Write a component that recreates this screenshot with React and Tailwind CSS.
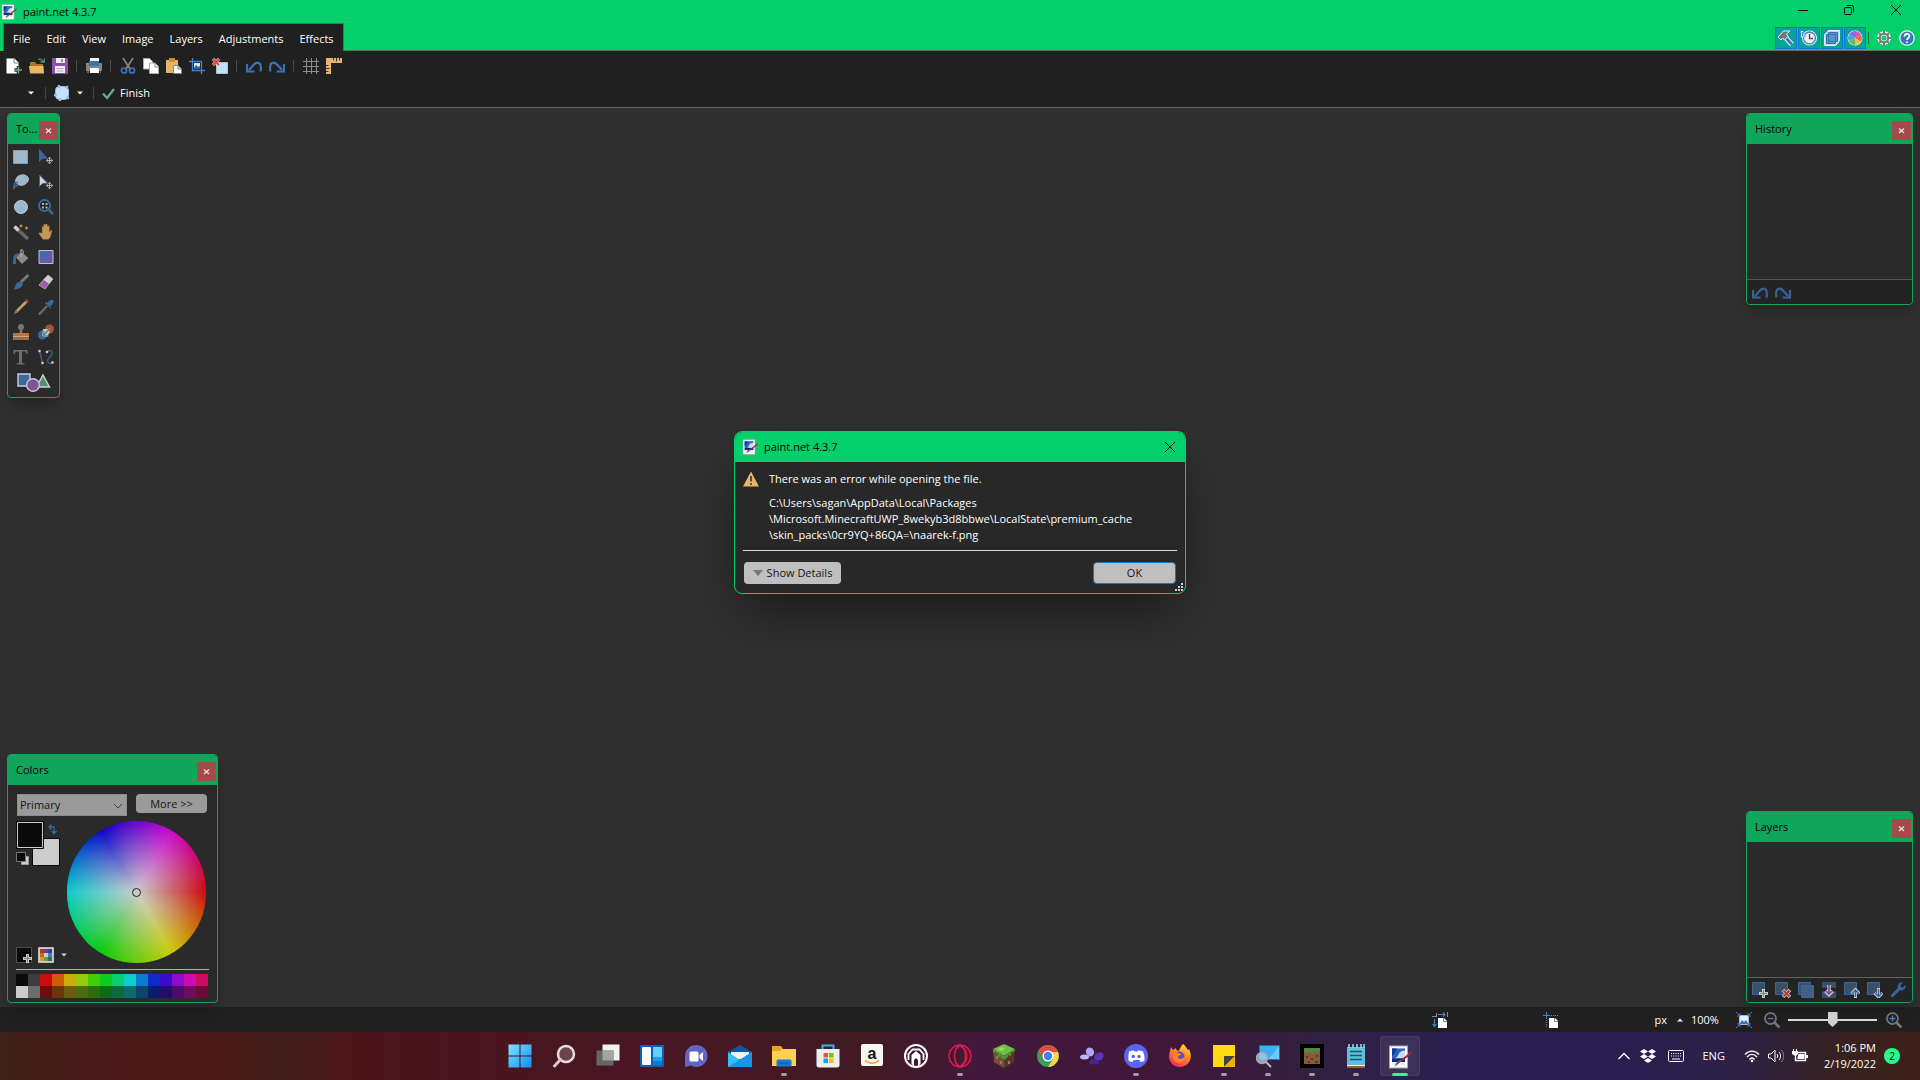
import { useState } from "react";

const menus = ["File", "Edit", "View", "Image", "Layers", "Adjustments", "Effects"];

const palette = [
  ["#0a0a0a", "#3c3c3c", "#cc0c0c", "#cc5c0c", "#ccac0c", "#94cc0c", "#44cc0c", "#0ccc24", "#0ccc74", "#0ccccc", "#0c7ccc", "#0c2ccc", "#3c0ccc", "#8c0ccc", "#cc0cb0", "#cc0c5c"],
  ["#cccccc", "#6c6c6c", "#6c0c0c", "#6c340c", "#6c5c0c", "#4c6c0c", "#2c6c0c", "#0c6c18", "#0c6c40", "#0c6c6c", "#0c446c", "#0c1c6c", "#240c6c", "#4c0c6c", "#6c0c5c", "#6c0c34"],
];

function Svg({ children, size = 16, box = 16, className = "" }) {
  return (
    <svg
      width={size}
      height={size}
      viewBox={`0 0 ${box} ${box}`}
      fill="none"
      className={`shrink-0 ${className}`}
      aria-hidden="true"
    >
      {children}
    </svg>
  );
}

function PaintLogo({ size = 16 }) {
  return (
    <Svg size={size} box={24}>
      <rect x="1.5" y="1" width="18" height="22" fill="#fff" stroke="#a8a8a8" />
      <path d="M4 3.500h13v13H4z" fill="#c9ddf7" />
      <path d="M4 3.500h13v2c-3 0-5 1-6 3s-2 4-4 5l-3 1z" fill="#2f62c0" />
      <path d="M4 3.500h5L7 8l-3 3z" fill="#0f3c98" />
      <path d="M4 14c4-1.500 9 0 13-1v4H4z" fill="#14286f" />
      <path d="M4 17h13v3H4z" fill="#e8edf5" />
      <path d="M23.500 7.500 14 15" stroke="#b3202c" strokeWidth="2" />
      <path d="M14.500 14.500 12.500 17 7 21.500c0-2.500 1.500-4.500 4-6z" fill="#5c5f66" />
    </Svg>
  );
}

function Undo({ flip = false }) {
  return (
    <Svg className={flip ? "-scale-x-100" : ""}>
      <path d="M3 12 8 6.500C10.500 3.500 16.500 3 14.500 13.500" stroke="#3a74b8" strokeWidth="2.200" />
      <path d="M1 6v7.500h7.500" stroke="#3a74b8" strokeWidth="2.200" />
    </Svg>
  );
}

const toolbarIcons = {
  new: (
    <Svg>
      <path d="M.5.5h8l4 4v11H.5z" fill="#fff" />
      <path d="M8 .5v4.500h4.500" stroke="#888" />
      <path d="M12.500 8v8M8.500 12h8" stroke="#202020" strokeWidth="3.500" />
      <path d="M12.500 8.500v7M9 12h7" stroke="#6fa893" strokeWidth="1.500" />
    </Svg>
  ),
  open: (
    <Svg>
      <path d="M1 15V4h5l1.500 2H14v2" fill="#a8752a" />
      <path d="M0 8h14.500l.5 7.500H1z" fill="#ecb662" />
      <path d="M9 1.500c3-1 5 .5 5.500 3M11.500 4h4V.5" stroke="#4f9278" strokeWidth="1.300" />
    </Svg>
  ),
  save: (
    <Svg>
      <path d="M0 0h15l1 1v15H0z" fill="#8d4ea6" />
      <path d="M4 0h9v5H4zM3 8h10v7H3z" fill="#f3eef5" />
      <path d="M10 1v3" stroke="#8d4ea6" strokeWidth="1.500" />
      <path d="M4.500 10.500h7M4.500 13h7" stroke="#aaa" />
    </Svg>
  ),
  print: (
    <Svg>
      <path d="M4 0h9v5H4z" fill="#f4f4f4" />
      <path d="M0 5h16v8H0z" fill="#858585" />
      <path d="M3 3h10v5H3z" fill="#3276b6" />
      <path d="M4 10h9v5H4z" fill="#fff" />
      <path d="M1 14h2M14 14h1" stroke="#aaa" />
    </Svg>
  ),
  cut: (
    <Svg>
      <path d="m3 0 7 11M13 0 6 11" stroke="#858585" strokeWidth="1.800" />
      <circle cx="4" cy="12.500" r="2.500" stroke="#3977bd" strokeWidth="1.700" />
      <circle cx="12" cy="12.500" r="2.500" stroke="#3977bd" strokeWidth="1.700" />
    </Svg>
  ),
  copy: (
    <Svg>
      <path d="M.5.5h6l3 3v7.500h-9z" fill="#fff" stroke="#aaa" />
      <path d="M6.500 5h5.500l3.500 3.500v7h-9z" fill="#fff" stroke="#aaa" />
      <path d="M12 5v4h3.500" stroke="#888" />
    </Svg>
  ),
  paste: (
    <Svg>
      <path d="M0 2h12v13H0z" fill="#e7b464" />
      <path d="M3 0h6v4H3z" fill="#c98d3a" />
      <path d="M7.500 7.500H12l3.500 3.500v4.500h-8z" fill="#fff" stroke="#888" />
      <path d="M12 7.500V11h3.500" stroke="#888" />
    </Svg>
  ),
  crop: (
    <Svg>
      <path d="M3.500 0v12.500H16M0 3.500h12.500V16" stroke="#3f85cd" strokeWidth="1.300" />
      <path d="M5 5h6v6H5z" fill="#d6e9fb" />
      <path d="m5 10 2-3 2 2 2-1v3H5z" fill="#2c5f9d" />
    </Svg>
  ),
  deselect: (
    <Svg>
      <path d="M4.500 4.500h11v11h-11z" fill="#c1e0fb" stroke="#fff" strokeDasharray="1 1" />
      <path d="m1 1 6 6M7 1 1 7" stroke="#fff" strokeWidth="3" />
      <path d="m1 1 6 6M7 1 1 7" stroke="#d5412c" strokeWidth="2" />
    </Svg>
  ),
  undo: <Undo />,
  redo: <Undo flip />,
  grid: (
    <Svg>
      <path d="M3.500 0v16M8.500 0v16M13.500 0v16M0 3.500h16M0 8.500h16M0 13.500h16" stroke="#8c8c8c" />
    </Svg>
  ),
  ruler: (
    <Svg>
      <path d="M0 0h16v5H5v11H0z" fill="#e5b673" />
      <path d="M7.500 0v2.500M10.500 0v3.500M13.500 0v2.500M0 7.500h2.500M0 10.500h3.500M0 13.500h2.500" stroke="#3d3020" />
    </Svg>
  ),
};

const toolbar = ["new", "open", "save", "|", "print", "|", "cut", "copy", "paste", "crop", "deselect", "|", "undo", "redo", "|", "grid", "ruler"];

const moveBadge = (
  <>
    <path d="M11.500 9.500v4M9.500 11.500h4" stroke="#b4b4b4" />
    <path d="m11.500 7.800 1.800 2H9.700zM11.500 15.200l1.800-2H9.700zM7.800 11.500l2-1.800v3.600zM15.200 11.500l-2-1.800v3.600z" fill="#b4b4b4" />
  </>
);

const tools = [
  ["Rectangle Select", <path d="M.5 1.500h14v13H.5z" fill="#9db7cf" stroke="#c6c6c6" strokeDasharray="1 1" />],
  ["Move Selected Pixels", <><path d="M1 0v13l3.500-3L10 9.500z" fill="#39689c" />{moveBadge}</>],
  ["Lasso Select", <><ellipse cx="9" cy="6" rx="6.500" ry="5" transform="rotate(-20 9 6)" fill="#9db7cf" stroke="#b9b9b9" /><path d="M5 9c-2-1-4 0-3.500 2s3 1.500 3-.5M1.500 11 .5 15.500" stroke="#39689c" strokeWidth="1.800" /></>],
  ["Move Selection", <><path d="M1.500 1v11.500l3-3 5-.5z" fill="#d6d6d6" stroke="#39689c" />{moveBadge}</>],
  ["Ellipse Select", <circle cx="8" cy="8" r="6.500" fill="#9db7cf" stroke="#c6c6c6" />],
  ["Zoom", <><circle cx="6.500" cy="6.500" r="5.500" fill="#222" stroke="#39689c" strokeWidth="2" /><path d="M4 4h2v2H4zM7.500 4h2v2h-2zM4 7.500h2v2H4zM7.500 7.500h2v2h-2z" fill="#b4b4b4" /><path d="m11 11 4 4" stroke="#39689c" strokeWidth="2.500" /></>],
  ["Magic Wand", <><path d="m2 3 13 12" stroke="#666" strokeWidth="3.500" /><path d="m1.500 2.500 4 4" stroke="#ccc" strokeWidth="3.500" /><path d="m8 0 .7 1.300L10 2l-1.300.7L8 4l-.7-1.300L6 2l1.300-.7zM13.500 2l.7 1.300 1.300.7-1.300.7-.7 1.300-.7-1.300-1.300-.7 1.300-.7z" fill="#c99a4e" /></>],
  ["Pan", <path d="M4 9V3c0-1.500 1.500-1.500 1.500 0V1c0-1.500 2-1.500 2 0V.5c0-1 2-1 2 0v2c0-1 2-1 2 0V8l1-1.500c1-1 2 0 1.500 1L12.500 13l-2 2.500H5L1 10C.5 8.500 2 8 3 9z" fill="#c29755" stroke="#604a2b" strokeWidth=".5" />],
  ["Paint Bucket", <><path d="m8 3 7.500 6L9 15 3 8.500z" fill="#8b8b8b" /><path d="M8 1v7M7 2c2-3 4-.5 3 3" stroke="#b8b8b8" /><path d="M8 4 3 5C0 6 0 10 0 15h3V8.500" fill="#39689c" /></>],
  ["Gradient", <><defs><linearGradient id="toolGradient" x1="0" y1="0" x2="1" y2="1"><stop stopColor="#2776b8" /><stop offset="1" stopColor="#8d48a0" /></linearGradient></defs><path d="M1 1.500h14v13H1z" fill="url(#toolGradient)" stroke="#c6c6c6" /></>],
  ["Paintbrush", <><path d="M15.500 1 8 8" stroke="#777" strokeWidth="3" /><path d="M9.500 9c1 4-3 6-9 6.500C3 13 2 9 6 8c1-.5 3 0 3.500 1z" fill="#39689c" /></>],
  ["Eraser", <><path d="m10 1 5 4-4 5-6-4z" fill="#ccc" /><path d="m5 6 6 4-4 5-6-4z" fill="#a55aae" /><path d="m10 1 5 4-8 10-6-4z" stroke="#ccb7cf" strokeWidth=".7" /></>],
  ["Pencil", <><path d="M14 2 3 13" stroke="#c99e67" strokeWidth="2.500" /><path d="m15 1-2 2" stroke="#a93c2f" strokeWidth="3" /><path d="M5 13 .5 15.500 3 11z" fill="#777" /></>],
  ["Color Picker", <><path d="m9 7-8 8.500" stroke="#686868" strokeWidth="2.500" /><path d="m7 4 5.500 5.500 1-1L12 7c2 0 4-3 3.500-5.500C14 0 11 1 10 4L8 3z" fill="#39689c" /></>],
  ["Clone Stamp", <><circle cx="8" cy="3" r="3" fill="#777" /><path d="M7 4h2l.5 5h-3z" fill="#777" /><path d="M0 9h16v3H0z" fill="#bd7439" /><path d="M0 12h16v1.500H0z" fill="#c8a98b" /><path d="M0 13.500h16V16H0z" fill="#a86a35" /></>],
  ["Recolor", <><circle cx="11.500" cy="5" r="4.500" fill="#b24b32" /><circle cx="4.500" cy="11" r="4.500" fill="#39689c" /><path d="M5 5h5l2 3-3 5-5-1z" fill="#c6c6c6" /><path d="M12 4 6 11M5.500 7v5h5" stroke="#5b947f" strokeWidth="1.700" /></>],
  ["Text", <path d="M.5 1h14v4h-1l-1-2.500H9V14l2.500.5v1h-8v-1L6 14V2.500H2.500L1.500 5h-1z" fill="#6e6e6e" />],
  ["Line / Curve", <><path d="m1.500 2 3 12M9 3c3-3 6-1 5 2s-6 5-4 8 4 1 5 1" stroke="#39689c" strokeWidth="1.300" /><circle cx="1.500" cy="2" r="1.300" fill="#ccc" /><circle cx="4.500" cy="14" r="1.300" fill="#ccc" /><circle cx="9" cy="3" r="1.300" fill="#ccc" /><circle cx="14.500" cy="13.500" r="1.300" fill="#ccc" /></>],
];

// Every layer action shares the blue sheet and adds its own badge.
const layerActions = [
  ["Add New Layer", <><path d="M.5.5h12v12H.5z" fill="#39506b" stroke="#39689c" /><path d="M11.500 7v9M7 11.500h9" stroke="#ccc" strokeWidth="3" /><path d="M11.500 8v7M8 11.500h7" stroke="#5b947f" /></>],
  ["Delete Layer", <><path d="M.5.5h12v12H.5z" fill="#39506b" stroke="#39689c" /><path d="m8 8 7 7m0-7-7 7" stroke="#ccc" strokeWidth="3.500" /><path d="m8.500 8.500 6 6m0-6-6 6" stroke="#b0402f" strokeWidth="2" /></>],
  ["Duplicate Layer", <><path d="M.5.500h12v12H.5z" fill="#39506b" stroke="#39689c" /><path d="M3.500 3.500h12v12h-12z" fill="#406087" stroke="#39689c" /></>],
  ["Merge Layer Down", <><path d="M1 0h14v5H1zM1 10h14v6H1z" fill="#39506b" /><path d="M1 5h14M1 10h14" stroke="#39689c" /><path d="M8 3v9M4.500 9 8 12.500 11.500 9" stroke="#ccc" strokeWidth="3.500" /><path d="M8 3v9M5 9l3 3 3-3" stroke="#7e4b94" strokeWidth="1.700" /></>],
  ["Move Layer Up", <><path d="M.5.5h12v12H.5z" fill="#39506b" stroke="#39689c" /><path d="M11.500 16V8M7.500 11.500l4-4 4 4" stroke="#ccc" strokeWidth="3" /><path d="M11.500 15V8M8 11.500 11.500 8l3.500 3.500" stroke="#39689c" strokeWidth="1.500" /></>],
  ["Move Layer Down", <><path d="M.5.500h12v12H.5z" fill="#39506b" stroke="#39689c" /><path d="M11.500 6v9M7.500 11l4 4 4-4" stroke="#ccc" strokeWidth="3" /><path d="M11.500 7v7M8 11l3.500 3.500L15 11" stroke="#39689c" strokeWidth="1.500" /></>],
  ["Layer Properties", <><path d="m1.500 14.500 8-8" stroke="#39689c" strokeWidth="3" /><path d="M13 .5C9 0 7 3 8 6l2 2c3 1 6-1 5.500-5L13 5.500 10.500 5 10.500 3z" fill="#39689c" /></>],
];

const windowButtons = [
  ["Tools", <><path d="m6 6 8 8.500" stroke="#eef4fb" strokeWidth="5" /><path d="M0 7 5.500 1H12l-3.500 3 1.500 2.500-3.500 3.500-2-2L3 10z" fill="#777" stroke="#eee" /><path d="m8.500 8.500 5.500 6" stroke="#3976b8" strokeWidth="2.800" /></>],
  ["History", <><circle cx="8.500" cy="8" r="6.500" fill="#eee" stroke="#fff" strokeWidth="2" /><circle cx="8.500" cy="8" r="6" stroke="#4481bd" strokeWidth="1.300" /><path d="M8.500 4v4.500H12" stroke="#555" strokeWidth="1.300" /><path d="M1 1v5h5" stroke="#fff" strokeWidth="2.500" /><path d="M1.500 2v4h4" stroke="#4481bd" strokeWidth="1.200" /></>],
  ["Layers", <><path d="M4.500.500h11v10l-2 3-2 2H.500v-11l2-2z" fill="#b9dbf8" stroke="#e4effa" /><path d="M4.500 2.500h9v9h-9zM2.500 4.500h9v9h-9z" fill="#5694d2" stroke="#3b71af" /></>],
  ["Colors", <><circle cx="8" cy="8" r="7.500" fill="#fff" /><path d="M8 8V1a7 7 0 0 1 6 3.500z" fill="#d254c0" /><path d="M8 8V1a7 7 0 0 0-6 3.500z" fill="#8a6de2" /><path d="M8 8 2 4.500a7 7 0 0 0 0 7z" fill="#3fa8e0" /><path d="m8 8-6 3.500A7 7 0 0 0 8 15z" fill="#67b85f" /><path d="M8 8v7a7 7 0 0 0 6-3.500z" fill="#e9c545" /><path d="m8 8 6 3.500a7 7 0 0 0 0-7z" fill="#ef6450" /></>],
];

const gearTeeth = "M8 1v3M8 12v3M1 8h3M12 8h3M3 3l2 2M11 11l2 2M3 13l2-2M11 5l2-2";

const taskbarApps = [
  ["Start", <><defs><linearGradient id="win" x1="0" y1="0" x2="24" y2="24" gradientUnits="userSpaceOnUse"><stop stopColor="#7fe6ff" /><stop offset="1" stopColor="#0a8bf5" /></linearGradient></defs><path d="M.5.500h11v11H.5zM12.500.500h11v11h-11zM.5 12.500h11v11H.5zM12.500 12.500h11v11h-11z" fill="url(#win)" /></>],
  ["Search", <><circle cx="14" cy="10" r="8" fill="#fff" fillOpacity=".2" stroke="#e3dede" strokeWidth="2.500" /><path d="m8.500 15.500-6 6.500" stroke="#d5cdcd" strokeWidth="3" strokeLinecap="round" /></>],
  ["Task View", <><path d="M6.500.500h17v16h-17z" fill="#f2f2f2" /><path d="M.5 6.500h17v15H.5z" fill="#666" /><path d="M6.500 6.500h11v10h-11z" fill="#a3a3a3" /></>],
  ["Widgets", <><rect y="1" width="24" height="22" rx="1" fill="#0b62b5" /><rect x="2" y="3" width="9" height="18" rx="1" fill="#f5fbff" /><path d="M13 3h9v10h-9z" fill="#61d2ff" /><path d="M13 13h9v4h-9z" fill="#199fe9" /><path d="M13 17h9v4h-9z" fill="#0c78dc" /></>],
  ["Chat", <><path d="M12 1a11 11 0 1 1-5 20.500L1 23V12A11 11 0 0 1 12 1z" fill="#6264c7" /><rect x="5.500" y="7.500" width="9" height="10" rx="1.500" fill="#fff" /><path d="m15.500 11 3.500-3v9l-3.500-3z" fill="#fff" /></>],
  ["Mail", <><path d="M0 8 12 1l12 7v8H0z" fill="#0b58a7" /><path d="M3 8h18v7H3z" fill="#eef3f8" /><path d="m0 8 12 8L24 8v15H0z" fill="#39bdf3" /><path d="m24 8-24 15h24z" fill="#1d94e6" /></>],
  ["File Explorer", <><path d="M0 2h9l2 3h13v6H0z" fill="#e7a51b" /><path d="M0 7h8l2-2h14v17H0z" fill="#ffd152" /><path d="M4.500 22.500V17q0-1.500 1.500-1.500h12q1.500 0 1.500 1.500v5.500z" fill="#187bd2" /><path d="M7 19h10" stroke="#0d5199" /></>, "run"],
  ["Microsoft Store", <><path d="M6.500 6V1.500h11V6" stroke="#35b4ec" strokeWidth="2" /><path d="M.5 5h23v16q0 2.500-2.500 2.500H3Q.5 23.500.5 21z" fill="#eceff2" /><path d="M7.500 9H12v4.500H7.500z" fill="#f35325" /><path d="M13 9h4.500v4.500H13z" fill="#81bc06" /><path d="M7.500 14.500H12V19H7.500z" fill="#05a6f0" /><path d="M13 14.500h4.500V19H13z" fill="#ffba08" /></>],
  ["Amazon", <><rect x="1" y="0" width="22" height="22" rx="2" fill="#f5f5f5" /><text x="12" y="15" textAnchor="middle" fontFamily="Liberation Sans, sans-serif" fontWeight="700" fontSize="16" fill="#111">a</text><path d="M5 16.500c4 3.500 10 3.500 14 0" stroke="#ff9a16" strokeWidth="1.500" /></>],
  ["Nox", <><circle cx="12" cy="12" r="11" stroke="#fff" strokeWidth="2" /><path d="M4.500 16v-6l4-4.500h7l4 4.500v6" stroke="#fff" strokeWidth="1.800" /><path d="M7.500 20v-9l4.500-4 4.500 4v9l-2.500 2v-6l-2-2-2 2v6z" fill="#fff" /></>],
  ["Opera GX", <><circle cx="12" cy="12" r="11" stroke="#e3174d" strokeWidth="1.600" /><ellipse cx="12" cy="12" rx="5.500" ry="10" stroke="#e3174d" strokeWidth="1.500" /><path d="M13 3c8 2 8 16 0 18" stroke="#e3174d" strokeWidth="1.200" /></>, "run"],
  ["Minecraft Launcher", <><path d="m12 0 11 5-11 7L1 5z" fill="#6fbe45" /><path d="m1 5 11 7v12L2 18z" fill="#755039" /><path d="m23 5-11 7v12l10-6z" fill="#573725" /><path d="m1 5 11 7v3l-3-1v-2l-3 1V9L1 8zM23 5l-11 7v4l4-3v-2l3 1V9l4-2z" fill="#4b9a2d" /><path d="m6 5 4-2 3 2-4 2z" fill="#98da61" /><path d="M4 12h2v3H4zM8 17h2v3H8zM16 17h2v3h-2z" fill="#a0775a" /></>],
  ["Chrome", <><circle cx="12" cy="12" r="11" fill="#34a056" /><path d="M2.500 6.500a11 11 0 0 1 19 0L22 8H12l-5 7z" fill="#df4c40" /><path d="M22 8H12l5 7-5 8A11 11 0 0 0 22 8z" fill="#fcd14a" /><circle cx="12" cy="12" r="5.500" fill="#fff" /><circle cx="12" cy="12" r="4.200" fill="#4183ed" /></>],
  ["Beans", <><ellipse cx="10" cy="8" rx="4" ry="4.500" transform="rotate(-30 10 8)" fill="#ada5f3" /><ellipse cx="4.500" cy="13" rx="4.500" ry="2.500" fill="#beb7fa" /><ellipse cx="19" cy="12.500" rx="5" ry="4" transform="rotate(-35 19 12.500)" fill="#5b32b8" /><ellipse cx="14" cy="18" rx="5" ry="2.500" fill="#482296" /></>],
  ["Discord", <><circle cx="12" cy="12" r="12" fill="#5865f2" /><path d="M5 7.500Q8 6 10 6.500l.5 1h3l.5-1q2-.5 5 1 2 4 1.500 9-2 1.500-4 1.500l-1-2H9.500l-1 2q-2 0-4-1.500Q4 11.500 5 7.500z" fill="#fff" /><ellipse cx="9.300" cy="12.500" rx="1.700" ry="1.800" fill="#5865f2" /><ellipse cx="15" cy="12.500" rx="1.700" ry="1.800" fill="#5865f2" /></>, "run"],
  ["Firefox", <><defs><linearGradient id="fox" x1=".8" y1="0" x2=".3" y2="1"><stop stopColor="#ffe13c" /><stop offset=".45" stopColor="#ff8b1e" /><stop offset="1" stopColor="#f2236f" /></linearGradient></defs><path d="M15 0c3 2 3 4 5 6 1 0 1-1 1-1 5 10-1 18-9 18C3 23-1 15 2 7l1-4 2 3 3-2c0 2 1 2 2 3 2-1 2-4 5-7z" fill="url(#fox)" /><circle cx="11.500" cy="12.500" r="5" fill="#7145c9" /><path d="M5 10c3-3 5-1 8 0-1 2-4 2-3 4 2 2 5 1 7-2 0 5-3 7-6 7-4 0-7-4-6-9z" fill="#ff8424" /></>],
  ["Sticky Notes", <><path d="M1 1h22v22H1z" fill="#ffda13" /><path d="M12 23V12h11z" fill="#424242" /><path d="M12 23h11V12z" fill="#edaf08" /></>, "run"],
  ["Remote Viewer", <><path d="M3.500 1.500h20v14h-20z" fill="#3eaef7" stroke="#326f8d" /><path d="M13 15 23 2v13z" fill="#6acbff" /><circle cx="6" cy="14" r="5.500" fill="#a4c9dc" fillOpacity=".8" stroke="#a1aab3" strokeWidth="1.500" /><path d="m10 18 5 5" stroke="#b8b8b8" strokeWidth="2" /></>, "run"],
  ["Minecraft", <><path d="M0 0h24v24H0z" fill="#000" /><path d="M4 4h16v16H4z" fill="#8a583b" /><path d="M4 4h16v3h-2v2h-2V7h-3v3h-2V8H8v2H6V8H4z" fill="#59863d" /><path d="M6 12h2v2H6zM11 14h2v2h-2zM16 11h2v2h-2zM8 17h2v2H8zM15 17h3v2h-3z" fill="#5d3926" /></>, "run"],
  ["Notepad", <><path d="M3 3h18v18H3z" fill="#61bfdd" /><path d="M3 21h18v2H3z" fill="#f5f5f5" /><path d="M3 22h18v2H3z" fill="#a75e2b" /><path d="M5 0v4M9 0v4M13 0v4M17 0v4M20 0v4" stroke="#9bdaf0" strokeWidth="1.500" /><path d="M6 7.500h12M6 11.500h12M6 15.500h12" stroke="#12586f" strokeWidth="1.500" /></>, "run"],
  ["paint.net", null, "active"],
];

function Separator() {
  return (
    <span className="flex w-[11px] shrink-0 justify-center">
      <span className="h-3 w-px bg-[#4a4a4a]" />
    </span>
  );
}

function Panel({ title, className, children }) {
  return (
    <section
      aria-label={title}
      className={`absolute flex flex-col overflow-hidden rounded border border-[#0fa65c] bg-[#2a2a2a] shadow-lg shadow-black/20 ${className}`}
    >
      <header className="flex h-[30px] shrink-0 items-center justify-between bg-[#0fa65c] pl-2 pr-px">
        <h2 className="text-[11px] leading-4 text-black">{title}</h2>
        <button
          type="button"
          aria-label="Close"
          className="mt-[3px] flex size-[19px] items-center justify-center bg-[#a44a4b]"
        >
          <Svg size={7} box={7}>
            <path d="M1 1.500 6 6M6 1.500 1 6" stroke="#ddd" strokeWidth="1.500" />
          </Svg>
        </button>
      </header>
      {children}
    </section>
  );
}

function TitleBar() {
  return (
    <header className="bg-[#03cf6b]">
      <div className="flex h-[23px] items-center justify-between pl-px">
        <div className="flex items-center gap-1.5">
          <PaintLogo />
          <h1 className="text-[11px] leading-4 text-black">paint.net 4.3.7</h1>
        </div>
        <div className="flex items-center">
          <button type="button" aria-label="Minimize" className="flex w-[46px] justify-center pb-1">
            <Svg size={10} box={10}><path d="M0 5.500h10" stroke="#000" /></Svg>
          </button>
          <button type="button" aria-label="Restore" className="flex w-[46px] justify-center pb-1">
            <Svg size={10} box={10}>
              <rect x=".5" y="2.500" width="7" height="7" rx="1" stroke="#000" />
              <path d="M2.500.500h5q2 0 2 2v5" stroke="#000" />
            </Svg>
          </button>
          <button type="button" aria-label="Close window" className="flex w-12 justify-center pb-1">
            <Svg size={10} box={10}><path d="m0 0 10 10M10 0 0 10" stroke="#000" /></Svg>
          </button>
        </div>
      </div>
      <div className="flex h-[30px] items-stretch border-b-2 border-[#202020]">
        <nav className="ml-[3px] flex items-center border border-b-0 border-[#5b6b62] bg-[#202020] px-px pt-0.5">
          {menus.map((menu) => (
            <button key={menu} type="button" className="px-2 text-[11px] leading-4 text-white">
              {menu}
            </button>
          ))}
        </nav>
        <div className="flex flex-1 items-center justify-end gap-px border-b border-[#5b7266] pr-0.5 pt-0.5">
          {windowButtons.map(([label, art]) => (
            <button
              key={label}
              type="button"
              aria-label={`Toggle ${label}`}
              className="flex size-[22px] items-center justify-center border border-[#0a78d0] bg-[#06a39b]"
            >
              <Svg>{art}</Svg>
            </button>
          ))}
          <span className="ml-px mr-[3px] h-3 w-px bg-[#1d6f4a]" />
          <button type="button" aria-label="Settings" className="flex w-[22px] justify-center">
            <Svg>
              <path d={gearTeeth} stroke="#e6efe9" strokeWidth="4" />
              <circle cx="8" cy="8" r="4.500" stroke="#e6efe9" strokeWidth="4" />
              <path d={gearTeeth} stroke="#777" strokeWidth="2" />
              <circle cx="8" cy="8" r="4.200" stroke="#777" strokeWidth="2" />
            </Svg>
          </button>
          <button type="button" aria-label="Help" className="flex w-[22px] justify-center">
            <Svg>
              <circle cx="8" cy="8" r="7.200" fill="#3976b8" stroke="#eef" strokeWidth="1.300" />
              <path d="M5.500 6.500C5.500 3 10.500 3 10.500 6 10.500 8 8 8 8 10M8 11.500v1.500" stroke="#fff" strokeWidth="1.700" />
            </Svg>
          </button>
        </div>
      </div>
    </header>
  );
}

function Toolbars() {
  return (
    <div className="border-b border-[#666] bg-[#202020] pl-0.5">
      <div className="flex h-[26px] items-center">
        {toolbar.map((name, index) =>
          name === "|" ? (
            <Separator key={index} />
          ) : (
            <button key={name} type="button" aria-label={name} className="flex w-[23px] justify-center">
              {toolbarIcons[name]}
            </button>
          )
        )}
      </div>
      <div className="flex h-7 items-center pl-6">
        <button type="button" aria-label="Tool menu" className="flex w-2.5 justify-center">
          <Svg size={6} box={6}><path d="M0 1.500h6l-3 3z" fill="#fff" /></Svg>
        </button>
        <span className="ml-[9px] h-3 w-px bg-[#4a4a4a]" />
        <button type="button" aria-label="Shape" className="ml-2 flex items-center gap-[7px]">
          <Svg>
            <rect x="1.500" y="1.500" width="13" height="13" rx="4" fill="#c2e2ff" stroke="#9cc4e6" />
            <path d="M4 0h2v2H4zM12 1h2v2h-2zM0 9h2v2H0zM13 12h2v2h-2zM5 14h2v2H5z" fill="#fff" stroke="#3f85cd" strokeWidth=".6" />
          </Svg>
          <Svg size={6} box={6}><path d="M0 1.500h6l-3 3z" fill="#fff" /></Svg>
        </button>
        <span className="ml-2.5 h-3 w-px bg-[#4a4a4a]" />
        <button type="button" className="ml-2 flex items-center gap-[5px] text-[11px] leading-4 text-white">
          <Svg size={13} box={13}><path d="m1 6.500 4 4.500L12 2" stroke="#6fa893" strokeWidth="2.200" /></Svg>
          Finish
        </button>
      </div>
    </div>
  );
}

function ToolsPanel() {
  return (
    <Panel title="To..." className="left-[7px] top-[5px] w-[53px]">
      <div className="grid grid-cols-2 px-px">
        {tools.map(([label, art]) => (
          <button key={label} type="button" aria-label={label} className="flex h-[25px] items-center justify-center">
            <Svg>{art}</Svg>
          </button>
        ))}
      </div>
      <button type="button" aria-label="Shapes" className="flex h-7 justify-center pt-1">
        <svg width="34" height="20" viewBox="0 0 34 20" fill="none" aria-hidden="true">
          <path d="M1 1h12v12H1z" fill="#3d689c" stroke="#c6d2de" strokeWidth="1.400" />
          <path d="m26 2 6.500 12h-13z" fill="#558a77" stroke="#cbd8d2" strokeWidth="1.400" />
          <circle cx="16" cy="12" r="6.300" fill="#7c5299" stroke="#cfc1d8" strokeWidth="1.400" />
        </svg>
      </button>
    </Panel>
  );
}

function HistoryPanel() {
  return (
    <Panel title="History" className="right-[7px] top-[5px] w-[167px]">
      <div className="h-[135px]" />
      <footer className="flex h-[25px] items-center gap-[7px] border-t border-[#606060] bg-[#242424] pl-[5px] opacity-80">
        <button type="button" aria-label="Undo"><Undo /></button>
        <button type="button" aria-label="Redo"><Undo flip /></button>
      </footer>
    </Panel>
  );
}

function LayersPanel() {
  return (
    <Panel title="Layers" className="bottom-1 right-[7px] w-[167px]">
      <div className="h-[135px]" />
      <footer className="flex h-[25px] items-center gap-[7px] border-t border-[#606060] bg-[#242424] pl-[5px]">
        {layerActions.map(([label, art]) => (
          <button key={label} type="button" aria-label={label}>
            <Svg>{art}</Svg>
          </button>
        ))}
      </footer>
    </Panel>
  );
}

function ColorsPanel() {
  return (
    <Panel title="Colors" className="bottom-1 left-[7px] w-[211px]">
      <div className="flex flex-col px-2 pt-[9px]">
        <div className="flex items-start justify-between pl-px pr-0.5">
          <div className="relative">
            <select
              aria-label="Active color"
              defaultValue="Primary"
              className="block h-[22px] w-[110px] appearance-none border border-[#8c8c8c] bg-[#9a9a9a] pl-0.5 text-[11px] leading-4 text-[#151515]"
            >
              <option>Primary</option>
              <option>Secondary</option>
            </select>
            <Svg size={8} box={8} className="pointer-events-none absolute right-[5px] top-2">
              <path d="m0 2 4 4 4-4" stroke="#444" />
            </Svg>
          </div>
          <button type="button" className="h-[19px] w-[71px] rounded-sm bg-[#9a9a9a] text-[11px] leading-4 text-[#151515]">
            More &gt;&gt;
          </button>
        </div>
        <div className="mt-[5px] flex justify-between pr-[3px]">
          <div className="flex flex-col justify-between">
            <svg width="45" height="45" viewBox="0 0 45 45" fill="none" aria-hidden="true">
              <path d="M16.500 17.500h27v27h-27z" fill="#ccc" stroke="#0a0a0a" />
              <path d="M.5.500h27v27H.5z" fill="#0a0a0a" stroke="#0a0a0a" />
              <path d="M1.500 1.500h25v25h-25z" fill="#0a0a0a" stroke="#ccc" />
              <path d="M5.500 35.500h7v8h-7z" fill="#ccc" stroke="#999" />
              <path d="M.5 31.500h9v9h-9z" fill="#0a0a0a" stroke="#777" />
              <path d="M33 6h5v6M35.500 3.500 33 6l2.500 2.500M35.500 10l2.500 2.500 2.500-2.500" stroke="#39689c" strokeWidth="1.400" />
            </svg>
            <div className="flex items-center gap-1.5">
              <button type="button" aria-label="Add color to palette">
                <Svg>
                  <path d="M.5.500h15v15H.5z" fill="#0a0a0a" stroke="#505050" />
                  <path d="M11.500 7v9M7 11.500h9" stroke="#ccc" strokeWidth="3" />
                  <path d="M11.500 8v7M8 11.500h7" stroke="#5b947f" />
                </Svg>
              </button>
              <button type="button" aria-label="Palettes" className="flex items-center gap-[7px]">
                <Svg>
                  <path d="M.5.500h15v15H.5z" fill="#ccc" stroke="#bbb" />
                  <path d="M2 2h4v4H2z" fill="#a83a30" />
                  <path d="M6 2h4v4H6z" fill="#7a3580" />
                  <path d="M10 2h4v4h-4z" fill="#3d3d88" />
                  <path d="M2 6h4v4H2z" fill="#c4682a" />
                  <path d="M10 6h4v4h-4z" fill="#4a79c8" />
                  <path d="M2 10h4v4H2z" fill="#d09d28" />
                  <path d="M6 10h4v4H6z" fill="#6f9a35" />
                  <path d="M10 10h4v4h-4z" fill="#247550" />
                </Svg>
                <Svg size={6} box={6}><path d="M0 1.500h6l-3 3z" fill="#ccc" /></Svg>
              </button>
            </div>
          </div>
          <div className="flex size-[142px] items-center justify-center rounded-full bg-[radial-gradient(circle_closest-side,#cccccc_0%,#cccccc00_100%),conic-gradient(from_90deg,#cc0a0a,#cccc0a,#0acc0a,#0acccc,#0a0acc,#cc0acc,#cc0a0a)]">
            <span className="size-[9px] rounded-full border border-[#222]" />
          </div>
        </div>
        <div className="mt-1.5 h-px bg-[#a9b4bb]" />
      </div>
      <div className="mb-1 mt-1 px-2">
        {palette.map((row, index) => (
          <div key={index} className="flex">
            {row.map((color) => (
              <button
                key={color}
                type="button"
                aria-label={color}
                className="size-3"
                style={{ backgroundColor: color }}
              />
            ))}
          </div>
        ))}
      </div>
    </Panel>
  );
}

function ErrorDialog() {
  return (
    <div
      role="dialog"
      aria-labelledby="dialog-title"
      className="absolute left-1/2 top-[323px] w-[452px] -translate-x-1/2 overflow-hidden rounded-lg border border-[#03cf6b] bg-[#282828] shadow-2xl shadow-black/50"
    >
      <header className="flex h-[30px] items-center justify-between bg-[#03cf6b] pl-[7px] pr-2.5">
        <div className="flex items-center gap-1.5">
          <PaintLogo />
          <h2 id="dialog-title" className="text-[11px] leading-4 text-black">paint.net 4.3.7</h2>
        </div>
        <button type="button" aria-label="Close dialog">
          <Svg size={10} box={10}><path d="m0 0 10 10M10 0 0 10" stroke="#000" /></Svg>
        </button>
      </header>
      <div className="px-2 pt-[9px]">
        <div className="flex gap-2.5 text-[11px] leading-4 text-white">
          <Svg>
            <path d="M8 .500 16 15.500H0z" fill="#e8b465" />
            <path d="M8 5v5.500M8 12v2" stroke="#444" strokeWidth="1.800" />
          </Svg>
          <div className="flex flex-col gap-2">
            <p>There was an error while opening the file.</p>
            <p>
              C:\Users\sagan\AppData\Local\Packages
              <br />
              \Microsoft.MinecraftUWP_8wekyb3d8bbwe\LocalState\premium_cache
              <br />
              \skin_packs\0cr9YQ+86QA=\naarek-f.png
            </p>
          </div>
        </div>
        <div className="mt-[7px] h-px bg-[#cfdae2]" />
      </div>
      <div className="flex items-center justify-between px-[9px] pb-[9px] pt-[11px]">
        <button type="button" className="flex h-[22px] w-[97px] items-center justify-center gap-1 rounded-sm bg-[#bfbfbf] text-[11px] leading-4 text-[#151515]">
          <Svg size={10} box={10}><path d="M0 2h10L5 8z" fill="#777" /></Svg>
          Show Details
        </button>
        <button type="button" className="h-[22px] w-[83px] rounded-sm border border-[#0a78d0] bg-[#bfbfbf] text-[11px] leading-4 text-[#151515]">
          OK
        </button>
      </div>
      <Svg size={8} box={8} className="absolute bottom-0.5 right-0.5">
        <path d="M6 0h2v2H6zM3 3h2v2H3zM6 3h2v2H6zM0 6h2v2H0zM3 6h2v2H3zM6 6h2v2H6z" fill="#ccc" />
      </Svg>
    </div>
  );
}

function StatusBar() {
  const [zoom, setZoom] = useState(50);

  return (
    <footer className="flex h-[25px] items-center justify-end bg-[#202020] pr-[18px] text-[11px] leading-4 text-white">
      <Svg className="mr-[95px]">
        <path d="M0 4.500h4M4.500 1v4M15.500 0v5" stroke="#8c8c8c" />
        <path d="M6 2.500h7M11 .5l2 2-2 2M2.500 7v7M.5 12l2 2.500 2-2.500" stroke="#3f85cd" strokeWidth="1.200" />
        <path d="M6 6h6l3 3v7H6z" fill="#fff" />
        <path d="M11.500 6v3.500H15" stroke="#888" />
      </Svg>
      <Svg className="mr-24">
        <path d="M3.500 6v10M6 3.500h10" stroke="#8c8c8c" strokeDasharray="1 1" />
        <path d="M3.500 0v6M0 3.500h7" stroke="#3f85cd" />
        <path d="M6 6h6l3 3v7H6z" fill="#fff" />
        <path d="M11.500 6v3.500H15" stroke="#888" />
      </Svg>
      <button type="button" className="mr-2 flex items-center gap-2.5">
        px
        <Svg size={6} box={6}><path d="M0 4.500h6l-3-3z" fill="#fff" /></Svg>
      </button>
      <span className="mr-3.5 w-[31px]">100%</span>
      <button type="button" aria-label="Fit to window" className="mr-3">
        <Svg>
          <path d="M3.500 3.500h9v9h-9z" fill="#e6f1fc" stroke="#bbb" />
          <path d="m4 11 2-3 2 2 2-2 2 3v1H4z" fill="#3276b6" />
          <path d="m0 0 4 4M16 0l-4 4M0 16l4-4M16 16l-4-4M1 4h3V1M15 4h-3V1M1 12h3v3M15 12h-3v3" stroke="#3f85cd" />
        </Svg>
      </button>
      <button type="button" aria-label="Zoom out" className="mr-2">
        <Svg>
          <circle cx="6.500" cy="6.500" r="5.500" stroke="#777" strokeWidth="1.800" />
          <path d="m10.500 10.500 5 5" stroke="#777" strokeWidth="2.500" />
          <path d="M3.500 6.500h6" stroke="#3f85cd" strokeWidth="1.300" />
        </Svg>
      </button>
      <input
        type="range"
        aria-label="Zoom"
        value={zoom}
        onChange={(event) => setZoom(Number(event.target.value))}
        className="mr-[9px] h-4 w-[89px] appearance-none bg-[linear-gradient(#ddd,#ddd)] bg-[length:100%_2px] bg-center bg-no-repeat [&::-webkit-slider-thumb]:h-[15px] [&::-webkit-slider-thumb]:w-2.5 [&::-webkit-slider-thumb]:appearance-none [&::-webkit-slider-thumb]:bg-[#cfcfcf] [&::-webkit-slider-thumb]:[clip-path:polygon(0_0,100%_0,100%_70%,50%_100%,0_70%)]"
      />
      <button type="button" aria-label="Zoom in">
        <Svg>
          <circle cx="6.500" cy="6.500" r="5.500" stroke="#777" strokeWidth="1.800" />
          <path d="m10.500 10.500 5 5" stroke="#777" strokeWidth="2.500" />
          <path d="M3.500 6.500h6M6.500 3.500v6" stroke="#3f85cd" strokeWidth="1.300" />
        </Svg>
      </button>
    </footer>
  );
}

function Taskbar() {
  return (
    <footer className="grid h-12 grid-cols-[1fr_auto_1fr] items-center bg-[linear-gradient(90deg,#40211a_0%,#47191a_5%,#4c1716_10%,#401e1b_15%,#4d1419_18%,#4a1420_25%,#461824_38%,#411a22_45%,#42193b_51%,#411638_60%,#33203f_68%,#2a2150_75%,#291f4e_86%,#2c2142_91%,#38211f_96%,#3e2119_100%)]">
      <div />
      <div className="flex">
        {taskbarApps.map(([label, art, state]) => (
          <button
            key={label}
            type="button"
            aria-label={label}
            className={[
              "mx-0.5 flex h-10 w-10 flex-col items-center pt-2",
              state === "active" ? "rounded border border-white/5 bg-white/8" : "",
            ].join(" ")}
          >
            {art ? <Svg size={24} box={24}>{art}</Svg> : <PaintLogo size={24} />}
            {state === "run" && <span className="mt-[5px] h-[3px] w-1.5 rounded-full bg-[#a79aa9]" />}
            {state === "active" && <span className="mt-1 h-[3px] w-4 shrink-0 rounded-full bg-[#22ff8c]" />}
          </button>
        ))}
      </div>
      <div className="flex items-center justify-end pr-5 text-[11px] leading-4 text-white">
        <button type="button" aria-label="Show hidden icons" className="mr-2.5">
          <Svg size={12} box={12}><path d="m.5 9 5.500-5.500L11.500 9" stroke="#fff" strokeWidth="1.300" /></Svg>
        </button>
        <button type="button" aria-label="Dropbox" className="mr-3">
          <Svg>
            <path d="m4 1 4 2.500L4 6 0 3.500zM12 1l4 2.500L12 6 8 3.500zM4 6l4 2.500L4 11 0 8.500zM12 6l4 2.500L12 11 8 8.500zM8 10l4 2.500L8 15l-4-2.500z" fill="#fff" />
          </Svg>
        </button>
        <button type="button" aria-label="Touch keyboard" className="mr-[18px]">
          <Svg>
            <rect x=".5" y="2.500" width="15" height="11" rx="1" stroke="#fff" />
            <path d="M3 5.500h10M3 8h10" stroke="#fff" strokeDasharray="1 1.250" />
            <path d="M4 11h8" stroke="#fff" />
          </Svg>
        </button>
        <button type="button" className="mr-[19px]">ENG</button>
        <button type="button" aria-label="Network, volume and battery" className="mr-4 flex gap-2">
          <Svg>
            <path d="M1 6.500c4-4.500 10-4.500 14 0M3 9c3-3.500 7-3.500 10 0M5.500 11.500c1.500-2 3.500-2 5 0" stroke="#fff" strokeWidth="1.300" />
            <circle cx="8" cy="13" r="1.300" fill="#fff" />
          </Svg>
          <Svg>
            <path d="M.5 6h2.500l4-4v12l-4-4H.5z" stroke="#fff" />
            <path d="M9 6c1 1 1 3 0 4" stroke="#fff" />
            <path d="M11 4c2 2 2 6 0 8" stroke="#fff" />
            <path d="M13 2c3.500 3 3.500 9 0 12" stroke="#fff" strokeOpacity=".4" />
          </Svg>
          <Svg>
            <path d="M6 4.500h7.500v8h-10V9" stroke="#fff" strokeWidth="1.400" />
            <path d="M6.500 6h6v5h-7V9zM14 7h2v3h-2zM0 3h6v3L4 8v3H3V8L0 6zM1 1h1v2H1zM4 1h1v2H4z" fill="#fff" />
          </Svg>
        </button>
        <button type="button" className="mr-2 text-right">
          1:06 PM
          <br />
          2/19/2022
        </button>
        <button type="button" aria-label="2 notifications" className="flex size-4 items-center justify-center rounded-full bg-[#22ff8c] text-[10px] leading-4 text-black">
          2
        </button>
      </div>
    </footer>
  );
}

export default function App() {
  return (
    <div className="flex min-h-screen flex-col bg-[#2f2f2f] font-['Open_Sans',sans-serif]">
      <TitleBar />
      <Toolbars />
      <main className="relative flex-1">
        <ToolsPanel />
        <HistoryPanel />
        <ColorsPanel />
        <LayersPanel />
        <ErrorDialog />
      </main>
      <StatusBar />
      <Taskbar />
    </div>
  );
}
